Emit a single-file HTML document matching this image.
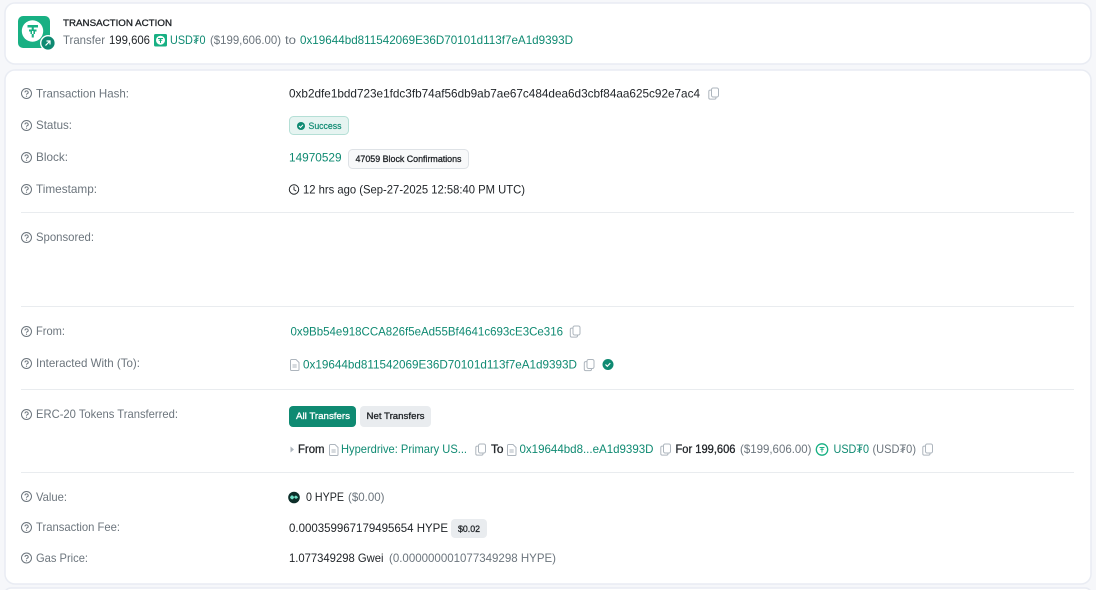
<!DOCTYPE html>
<html><head><meta charset="utf-8"><style>
html,body{margin:0;padding:0;background:#f6f7fa;width:1096px;height:590px;overflow:hidden}
svg{display:block}
text{font-family:"Liberation Sans",sans-serif;font-size:12px;fill:#212529}
.l{fill:#6c757d}.g{fill:#0f8a72}.m{fill:#6c757d}
.b{font-size:9.5px;stroke:#212529;stroke-width:.3}
.md{stroke:#212529;stroke-width:.3}
</style></head><body>
<svg width="1096" height="590" viewBox="0 0 1096 590" xmlns="http://www.w3.org/2000/svg">
<defs>
<g id="q"><circle cx="5.500" cy="5.500" r="5" fill="none" stroke="#6c757d" stroke-width="1"/><path d="M4 4.400a1.600 1.500 0 1 1 2.300 1.300c-.5.3-.8.5-.8 1" fill="none" stroke="#6c757d" stroke-width="1"/><circle cx="5.500" cy="8.200" r=".6" fill="#6c757d"/></g>
<g id="c"><rect x="3.500" y=".5" width="7" height="9" rx="1.600" fill="#fff" stroke="#adb5bd"/><path d="M3 2.600H2.200A1.400 1.400 0 0 0 .8 4v6.200a1.400 1.400 0 0 0 1.400 1.400h4.400A1.400 1.400 0 0 0 8 10.200V9.600" fill="none" stroke="#adb5bd"/></g>
<g id="d"><path d="M.5 1.500a1 1 0 0 1 1-1H6l3 3v7a1 1 0 0 1-1 1H1.500a1 1 0 0 1-1-1z" fill="none" stroke="#adb5bd"/><path d="M2.500 6h4.200M2.500 8h4.200" stroke="#adb5bd"/></g>
</defs>

<rect x="5" y="3" width="1086" height="61" rx="10" fill="#fff" stroke="#e9ecf3" stroke-width="1.500"/>
<rect x="5" y="70" width="1086" height="514" rx="10" fill="#fff" stroke="#e9ecf3" stroke-width="1.500"/>
<rect x="5" y="588" width="1086" height="10" rx="6" fill="#fff" stroke="#e9ecf3" stroke-width="1.500"/>

<!-- logo -->
<rect x="18" y="16" width="32" height="32" rx="5" fill="#18b083"/>
<circle cx="32.500" cy="31" r="10.700" fill="#fff"/>
<path d="M27.500 25H38V27.500H27.500Z" fill="#18b083"/>
<path d="M29 29.500H36.500V31.500H35V34H33.800V37.500H31.700V34H30.500V31.500H29Z" fill="#18b083"/>
<path d="M31.700 27.500H33.800V29.500H31.700Z" fill="#18b083"/>
<rect x="32" y="31" width="1.400" height="3" fill="#fff"/>
<circle cx="48" cy="43" r="7.300" fill="#0f8a72" stroke="#fff" stroke-width="1.400"/>
<path d="M45.500 45.500L50 41M46.500 41H50V44.500" fill="none" stroke="#fff" stroke-width="1.200"/>

<text x="63" y="26" class="b" textLength="109" lengthAdjust="spacingAndGlyphs">TRANSACTION ACTION</text>
<text x="63" y="44" class="m" textLength="42" lengthAdjust="spacingAndGlyphs">Transfer</text>
<text x="109" y="44" textLength="41" lengthAdjust="spacingAndGlyphs">199,606</text>
<rect x="154" y="34" width="13" height="12.500" rx="1.500" fill="#18b083"/>
<circle cx="160.500" cy="40.200" r="4.500" fill="#fff"/>
<path d="M158 38.500H163M160.500 38.500V43M158.800 40.300H162.200" stroke="#18b083" fill="none"/>
<text x="170" y="44" class="g" textLength="35.500" lengthAdjust="spacingAndGlyphs">USD₮0</text>
<text x="210" y="44" class="m" textLength="71" lengthAdjust="spacingAndGlyphs">($199,606.00)</text>
<text x="285" y="44" class="m" textLength="11" lengthAdjust="spacingAndGlyphs">to</text>
<text x="300" y="44" class="g" textLength="273" lengthAdjust="spacingAndGlyphs">0x19644bd811542069E36D70101d113f7eA1d9393D</text>

<!-- labels -->
<use href="#q" x="21" y="88"/><text x="36" y="97.500" class="l" textLength="93" lengthAdjust="spacingAndGlyphs">Transaction Hash:</text>
<use href="#q" x="21" y="120"/><text x="36" y="129" class="l" textLength="36" lengthAdjust="spacingAndGlyphs">Status:</text>
<use href="#q" x="21" y="152"/><text x="36" y="161" class="l" textLength="32" lengthAdjust="spacingAndGlyphs">Block:</text>
<use href="#q" x="21" y="184"/><text x="36" y="193" class="l" textLength="61" lengthAdjust="spacingAndGlyphs">Timestamp:</text>
<use href="#q" x="21" y="232"/><text x="36" y="241" class="l" textLength="58" lengthAdjust="spacingAndGlyphs">Sponsored:</text>
<use href="#q" x="21" y="326"/><text x="36" y="335" class="l" textLength="29" lengthAdjust="spacingAndGlyphs">From:</text>
<use href="#q" x="21" y="358"/><text x="36" y="367" class="l" textLength="104" lengthAdjust="spacingAndGlyphs">Interacted With (To):</text>
<use href="#q" x="21" y="409"/><text x="36" y="418" class="l" textLength="142" lengthAdjust="spacingAndGlyphs">ERC-20 Tokens Transferred:</text>
<use href="#q" x="21" y="491"/><text x="36" y="501" class="l" textLength="31" lengthAdjust="spacingAndGlyphs">Value:</text>
<use href="#q" x="21" y="522"/><text x="36" y="531" class="l" textLength="84" lengthAdjust="spacingAndGlyphs">Transaction Fee:</text>
<use href="#q" x="21" y="552.500"/><text x="36" y="562" class="l" textLength="52" lengthAdjust="spacingAndGlyphs">Gas Price:</text>

<path d="M21 212.500H1074M21 306.500H1074M21 389.500H1074M21 472.500H1074" stroke="#e9ecef"/>

<!-- hash -->
<text x="289" y="97.500" textLength="411" lengthAdjust="spacingAndGlyphs">0xb2dfe1bdd723e1fdc3fb74af56db9ab7ae67c484dea6d3cbf84aa625c92e7ac4</text>
<use href="#c" x="708" y="87.500"/>

<!-- status -->
<rect x="289.500" y="116.500" width="59" height="18" rx="4" fill="#e6f4f1" stroke="#b5dfd6"/>
<circle cx="301" cy="126" r="4" fill="#0f8a72"/>
<path d="M299 126l1.500 1.500 2.500-2.700" stroke="#fff" fill="none"/>
<text x="308.500" y="129" textLength="33" lengthAdjust="spacingAndGlyphs" style="font-size:9.500px;fill:#0f8a72;stroke:#0f8a72;stroke-width:.2">Success</text>

<!-- block -->
<text x="289" y="161.500" class="g" textLength="52.500" lengthAdjust="spacingAndGlyphs">14970529</text>
<rect x="348.500" y="149.500" width="120" height="19" rx="4" fill="#f8f9fa" stroke="#dee2e6"/>
<text x="355.500" y="162" class="b" textLength="106" lengthAdjust="spacingAndGlyphs">47059 Block Confirmations</text>

<!-- time -->
<circle cx="294" cy="189.500" r="4.700" fill="none" stroke="#212529"/>
<path d="M294 186.500V189.700L296.200 191" fill="none" stroke="#212529" stroke-width=".9"/>
<text x="303" y="193.500" textLength="222" lengthAdjust="spacingAndGlyphs">12 hrs ago (Sep-27-2025 12:58:40 PM UTC)</text>

<!-- from -->
<text x="290.500" y="335.500" class="g" textLength="272.500" lengthAdjust="spacingAndGlyphs">0x9Bb54e918CCA826f5eAd55Bf4641c693cE3Ce316</text>
<use href="#c" x="569.500" y="325.500"/>
<use href="#d" x="290" y="359"/>
<text x="303" y="368.500" class="g" textLength="274" lengthAdjust="spacingAndGlyphs">0x19644bd811542069E36D70101d113f7eA1d9393D</text>
<use href="#c" x="583.500" y="359"/>
<circle cx="608" cy="364.500" r="5.500" fill="#0f8a72"/>
<path d="M605.500 364.500l1.800 1.800 3-3.200" stroke="#fff" fill="none" stroke-width="1.200"/>

<!-- tabs -->
<rect x="289" y="406" width="67" height="21" rx="4" fill="#0f8a72"/>
<text x="296" y="419" textLength="54" lengthAdjust="spacingAndGlyphs" style="font-size:9.500px;fill:#fff;stroke:#fff;stroke-width:.3">All Transfers</text>
<rect x="360" y="406" width="71" height="21" rx="4" fill="#e9ecef"/>
<text x="366.500" y="419" class="b" textLength="58" lengthAdjust="spacingAndGlyphs">Net Transfers</text>

<!-- erc20 row -->
<path d="M290.500 446.500L294 449.500L290.500 452.500Z" fill="#adb5bd"/>
<text x="298" y="453" class="md" textLength="26.500" lengthAdjust="spacingAndGlyphs">From</text>
<use href="#d" x="329" y="444"/>
<text x="341" y="453" class="g" textLength="126" lengthAdjust="spacingAndGlyphs">Hyperdrive: Primary US...</text>
<use href="#c" x="475" y="443.500"/>
<text x="491" y="453" class="md" textLength="12.500" lengthAdjust="spacingAndGlyphs">To</text>
<use href="#d" x="507" y="444"/>
<text x="519.500" y="453" class="g" textLength="134" lengthAdjust="spacingAndGlyphs">0x19644bd8...eA1d9393D</text>
<use href="#c" x="660" y="443.500"/>
<text x="675.500" y="453" class="md" textLength="60" lengthAdjust="spacingAndGlyphs">For 199,606</text>
<text x="740" y="453" class="m" textLength="71.500" lengthAdjust="spacingAndGlyphs">($199,606.00)</text>
<circle cx="822" cy="449.500" r="5.700" fill="#fff" stroke="#18b083" stroke-width="1.300"/>
<path d="M819.500 447.500H824.500M822 447.500V452.500M820.300 449.300H823.700" stroke="#18b083" fill="none" stroke-width=".9"/>
<text x="833.500" y="453" class="g" textLength="35.500" lengthAdjust="spacingAndGlyphs">USD₮0</text>
<text x="872.500" y="453" class="m" textLength="43.500" lengthAdjust="spacingAndGlyphs">(USD₮0)</text>
<use href="#c" x="922" y="443.500"/>

<!-- value -->
<circle cx="294" cy="497.500" r="5.800" fill="#0d2f2a"/>
<path d="M290 497.500C291 495 292.500 494.500 294 497C295.500 499.500 296.500 499 298 497.500C296.500 495 295 495 294 497.500C293 500 291.500 500 290 497.500Z" fill="#6fe0c6"/>
<text x="306" y="501" textLength="38" lengthAdjust="spacingAndGlyphs">0 HYPE</text>
<text x="348" y="501" class="m" textLength="36.500" lengthAdjust="spacingAndGlyphs">($0.00)</text>

<!-- fee -->
<text x="289" y="532" textLength="159" lengthAdjust="spacingAndGlyphs">0.000359967179495654 HYPE</text>
<rect x="451" y="519" width="36" height="19" rx="4" fill="#e9ecef"/>
<text x="458" y="532" class="b" textLength="22" lengthAdjust="spacingAndGlyphs">$0.02</text>

<!-- gas -->
<text x="289" y="562" textLength="94.500" lengthAdjust="spacingAndGlyphs">1.077349298 Gwei</text>
<text x="389" y="562" class="m" textLength="167" lengthAdjust="spacingAndGlyphs">(0.000000001077349298 HYPE)</text>
</svg>
</body></html>
